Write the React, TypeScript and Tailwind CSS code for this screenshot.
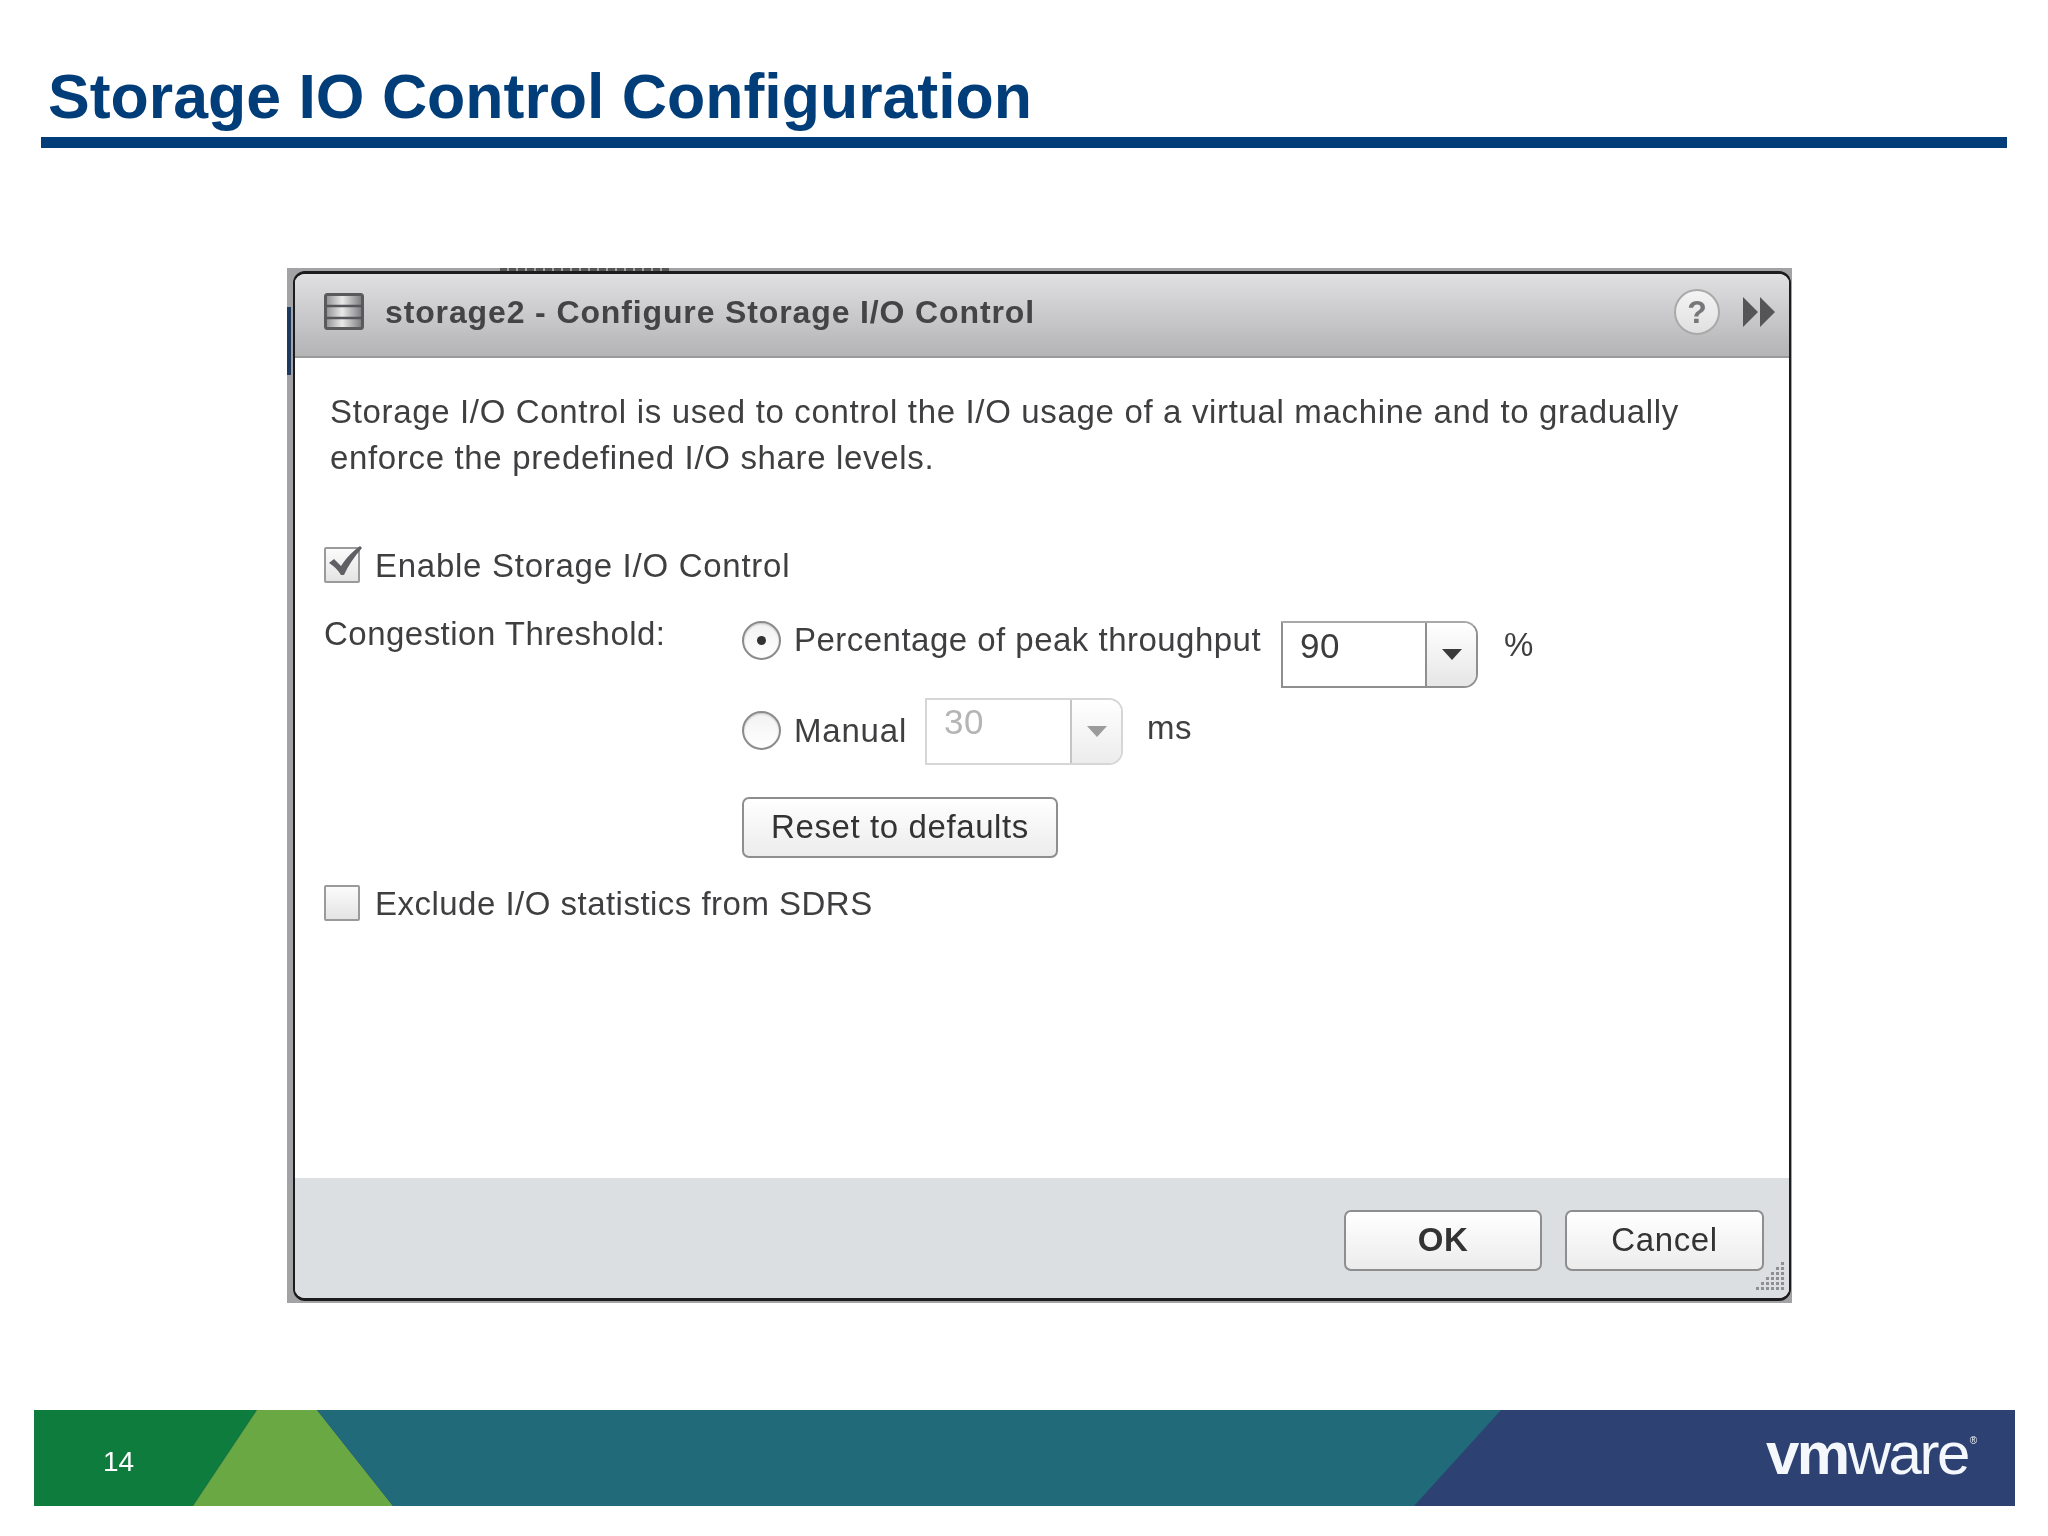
import React from "react";

const sans = "font-['Liberation_Sans',Arial,sans-serif]";

function DbIcon() {
  return (
    <svg width="40" height="37" viewBox="0 0 40 37" className="shrink-0">
      <defs>
        <linearGradient id="db" x1="0" x2="1" y1="0" y2="0">
          <stop offset="0" stopColor="#8e8e90" />
          <stop offset="0.45" stopColor="#e9e9ea" />
          <stop offset="1" stopColor="#77777a" />
        </linearGradient>
      </defs>
      <rect x="1.5" y="1.5" width="37" height="34" rx="2" fill="url(#db)" stroke="#5a5a5c" strokeWidth="3" />
      <path d="M2 13h36M2 25h36" stroke="#55555a" strokeWidth="2.5" />
    </svg>
  );
}

function Radio({ on }: { on?: boolean }) {
  return (
    <span className="flex h-[39px] w-[39px] shrink-0 items-center justify-center rounded-full border-2 border-[#8b8b8b] bg-gradient-to-b from-[#f2f2f2] to-[#ffffff] shadow-[inset_0_1px_2px_rgba(0,0,0,0.2)]">
      {on && <span className="h-[9px] w-[9px] rounded-full bg-[#333]" />}
    </span>
  );
}

function Check({ on }: { on?: boolean }) {
  return (
    <span className="relative block h-[36px] w-[36px] shrink-0 rounded-[2px] border-2 border-[#9a9a9a] bg-gradient-to-b from-[#fbfbfb] to-[#e4e4e4]">
      {on && (
        <svg width="38" height="38" viewBox="0 0 38 38" className="absolute left-[-1px] top-[-6px]">
          <path d="M4 20L9 16L16 23C22 14 28 8 35 3L37 5C29 14 23 23 19 32L16 32C13 27 9 23 4 20z" fill="#606064" />
        </svg>
      )}
    </span>
  );
}

function Combo({ value, off }: { value: string; off?: boolean }) {
  return (
    <div
      className={
        off
          ? "flex h-[67px] w-[198px] shrink-0 rounded-r-[14px] border-2 border-[#d6d6d6] bg-white"
          : "flex h-[67px] w-[197px] shrink-0 rounded-r-[14px] border-2 border-[#8f8f8f] border-t-[#a8a8a8] bg-white"
      }
    >
      <span
        className={
          off
            ? "flex-1 pl-[17px] pt-[2px] text-[35px] leading-[40px] text-[#b5b5b5]"
            : "flex-1 pl-[17px] pt-[3px] text-[35px] leading-[40px] text-[#3c3c3c]"
        }
      >
        {value}
      </span>
      <span
        className={
          off
            ? "flex w-[51px] items-center justify-center rounded-r-[12px] border-l-2 border-[#c4c4c4] bg-gradient-to-b from-white to-[#ececec]"
            : "flex w-[51px] items-center justify-center rounded-r-[12px] border-l-2 border-[#8f8f8f] bg-gradient-to-b from-white to-[#e6e6e6]"
        }
      >
        <svg width="22" height="13" viewBox="0 0 22 13">
          <path d="M1 1h20L11 12z" fill={off ? "#9b9b9b" : "#3a3a3a"} />
        </svg>
      </span>
    </div>
  );
}

function Btn({ children, w, h, bold }: { children: React.ReactNode; w: string; h: string; bold?: boolean }) {
  return (
    <button
      className={`${w} ${h} ${bold ? "font-bold" : ""} shrink-0 rounded-[7px] border-2 border-[#8e8e8e] bg-gradient-to-b from-white to-[#ececec] pb-[2px] text-[33px] leading-none tracking-[0.6px] text-[#333]`}
    >
      {children}
    </button>
  );
}

function Grip() {
  const dots: React.ReactNode[] = [];
  for (let r = 0; r < 6; r++) {
    for (let c = 5 - r; c < 6; c++) {
      dots.push(<rect key={`${r}-${c}`} x={c * 5} y={r * 5} width="3" height="3" fill="#8d8f92" />);
    }
  }
  return (
    <svg width="28" height="28" viewBox="0 0 28 28" className="absolute bottom-[8px] right-[5px]">
      {dots}
    </svg>
  );
}

export default function App() {
  return (
    <div className={`${sans} flex h-[1536px] w-[2048px] flex-col overflow-hidden bg-white blur-[0.5px]`}>
      <h1 className="pl-[48px] pt-[65px] text-[62.6px] font-bold leading-[63px] text-[#003d79]">
        Storage IO Control Configuration
      </h1>
      <div className="ml-[41px] mt-[9px] h-[11px] w-[1966px] bg-[#003d79]" />

      <div className="relative ml-[287px] mt-[120px] flex h-[1035px] w-[1505px] flex-col bg-[#a3a3a5] pb-[2px] pl-[6px] pr-[1px] pt-[3px]">
        <span className="absolute left-0 top-[39px] h-[68px] w-[4px] bg-[#1d3a5e]" />
        <span className="absolute left-[213px] top-[0px] h-[3px] w-[170px] bg-[repeating-linear-gradient(90deg,#555_0_7px,transparent_7px_9px)]" />
        <div className="relative flex flex-1 flex-col overflow-hidden rounded-[12px] border-[3px] border-[#1c1c1c] border-l-2 border-r-2 bg-white">
          <div className="flex h-[84px] shrink-0 items-center border-b-2 border-[#9a9a9c] bg-gradient-to-b from-[#e0e0e2] to-[#b4b4b7] pb-[7px] pl-[29px] pr-[14px]">
            <DbIcon />
            <span className="ml-[21px] text-[32px] font-bold leading-none tracking-[0.87px] text-[#444446]">
              storage2 - Configure Storage I/O Control
            </span>
            <span className="ml-auto flex h-[46px] w-[46px] items-center justify-center rounded-full border-2 border-[#a9a9a9] bg-gradient-to-b from-[#f4f4f4] to-[#e0e0e0] text-[32px] font-bold leading-none text-[#77777a]">
              ?
            </span>
            <svg width="32" height="30" viewBox="0 0 32 30" className="ml-[23px]">
              <path d="M0 0l15 15L0 30zM17 0l15 15-15 15z" fill="#555558" />
            </svg>
          </div>

          <div className="flex flex-1 flex-col pl-[29px] text-[33px] tracking-[0.48px] text-[#3f3f41]">
            <p className="pl-[6px] pt-[31px] leading-[46px] tracking-[0.66px]">
              Storage I/O Control is used to control the I/O usage of a virtual machine and to gradually
              <br />
              enforce the predefined I/O share levels.
            </p>

            <div className="mt-[66px] flex h-[36px] items-center">
              <Check on />
              <span className="ml-[15px] leading-none tracking-[0.73px]">Enable Storage I/O Control</span>
            </div>

            <div className="mt-[38px] flex">
              <div className="-mt-[1px] h-[28px] w-[418px] shrink-0 leading-[28px]">Congestion Threshold:</div>
              <div className="flex flex-col">
                <div className="flex items-start">
                  <Radio on />
                  <span className="ml-[13px] mt-[5px] w-[487px] leading-[28px]">Percentage of peak throughput</span>
                  <Combo value="90" />
                  <span className="ml-[26px] mt-[10px] leading-[28px]">%</span>
                </div>
                <div className="mt-[10px] flex items-start">
                  <span className="mt-[13px]">
                    <Radio />
                  </span>
                  <span className="ml-[13px] mt-[19px] w-[131px] leading-[28px] tracking-[0.8px]">Manual</span>
                  <Combo value="30" off />
                  <span className="ml-[24px] mt-[16px] leading-[28px]">ms</span>
                </div>
                <Btn w="w-[316px] mt-[32px]" h="h-[61px]">
                  Reset to defaults
                </Btn>
              </div>
            </div>

            <div className="mt-[27px] flex h-[36px] items-center">
              <Check />
              <span className="ml-[15px] leading-none">Exclude I/O statistics from SDRS</span>
            </div>
          </div>

          <div className="flex h-[120px] shrink-0 justify-end gap-[23px] bg-[#dbdfe2] pr-[25px] pt-[32px]">
            <Btn w="w-[198px]" h="h-[61px]" bold>
              OK
            </Btn>
            <Btn w="w-[199px]" h="h-[61px]">
              Cancel
            </Btn>
            <Grip />
          </div>
        </div>
      </div>

      <div className="relative ml-[34px] mt-[107px] h-[96px] w-[1981px] bg-[#2d4272]">
        <svg className="absolute inset-0" width="1981" height="96" viewBox="0 0 1981 96">
          <polygon points="0,0 223,0 159,96 0,96" fill="#0d7c3d" />
          <polygon points="223,0 283,0 359,96 159,96" fill="#6aa843" />
          <polygon points="283,0 1467,0 1380,96 359,96" fill="#216a7a" />
        </svg>
        <span className="absolute left-[69px] top-[37px] text-[28px] leading-[30px] text-white">14</span>
        <span className="absolute left-[1732px] top-[14px] flex items-baseline text-[60px] leading-[60px] tracking-[-2.5px] text-[#f4f8fc]">
          <span className="font-bold">vm</span>
          <span>ware</span>
          <span className="relative top-[-30px] ml-[2px] text-[10px] leading-none tracking-normal">®</span>
        </span>
      </div>
    </div>
  );
}
